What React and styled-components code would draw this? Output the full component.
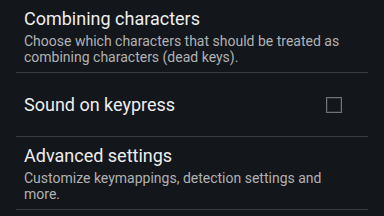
import React from "react";
import styled, { createGlobalStyle } from "styled-components";

const Global = createGlobalStyle`
  html, body { margin: 0; padding: 0; background: #13161a; }
  body { font-family: Roboto, "Noto Sans", "Liberation Sans", sans-serif; overflow: hidden; }
`;

const Screen = styled.div`
  width: 384px;
  height: 216px;
  background: #13161a;
  overflow: hidden;
`;

const List = styled.ul`
  list-style: none;
  margin: 0 16px;
  padding: 0;
`;

const Item = styled.li`
  display: flex;
  align-items: center;
  min-height: ${(p) => (p.$compact ? "64px" : "72px")};
  box-sizing: border-box;
  padding: 7px 8px;
  border-bottom: 1px solid #393c40;
`;

const TextBlock = styled.div`
  flex: 1;
  min-width: 0;
`;

const Title = styled.div`
  font-size: 18px;
  line-height: 24px;
  color: #eeeeee;
`;

const Summary = styled.div`
  margin-top: 2px;
  font-size: 14px;
  line-height: 16px;
  color: #b1b2b4;
  max-width: 320px;
`;

const Widget = styled.div`
  display: flex;
  align-items: center;
  padding-right: 18px;
`;

const CheckBox = styled.div`
  width: 16px;
  height: 16px;
  box-sizing: border-box;
  border: 1px solid rgba(190, 192, 196, 0.55);
  box-shadow: inset 0 0 0 1px rgba(255, 255, 255, 0.1);
`;

const prefs = [
  {
    title: "Combining characters",
    summary:
      "Choose which characters that should be treated as combining characters (dead keys).",
  },
  { title: "Sound on keypress", checkbox: true },
  {
    title: "Advanced settings",
    summary: "Customize keymappings, detection settings and more.",
  },
];

export default function App() {
  return (
    <Screen>
      <Global />
      <List>
        {prefs.map((p) => (
          <Item key={p.title} $compact={!p.summary}>
            <TextBlock>
              <Title>{p.title}</Title>
              {p.summary && <Summary>{p.summary}</Summary>}
            </TextBlock>
            {p.checkbox && (
              <Widget>
                <CheckBox />
              </Widget>
            )}
          </Item>
        ))}
      </List>
    </Screen>
  );
}
